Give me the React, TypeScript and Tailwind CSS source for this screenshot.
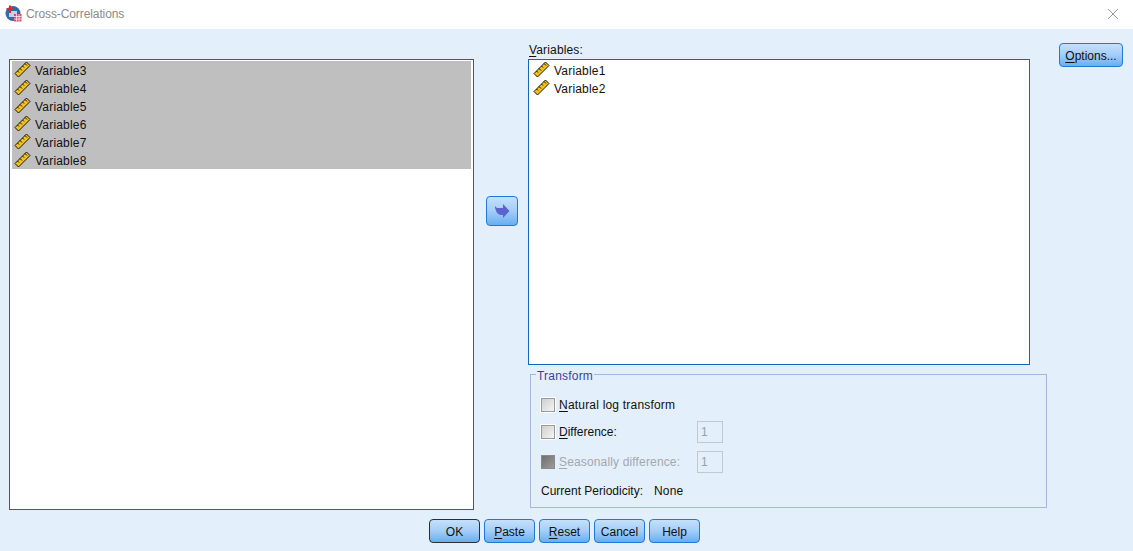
import React from "react";

const SELECTED = ["Variable3", "Variable4", "Variable5", "Variable6", "Variable7", "Variable8"];
const TARGET = ["Variable1", "Variable2"];

const btn =
  "h-[24px] rounded-[4px] border border-[#1f7ad6] bg-gradient-to-b from-[#c5e0fb] via-[#a3cdf7] to-[#68aef0] text-[12px] leading-none text-[#101010] flex items-center justify-center";

function Ruler() {
  return (
    <svg width="17" height="17" viewBox="0 0 17 17" className="shrink-0">
      <path d="M1 12.5 L12.5 1 L16 4.5 L4.5 16 Z" fill="#f2c21a" stroke="#141414" strokeWidth="1" strokeLinejoin="miter" />
      <path d="M3.5 10 L5 11.5 M6 7.5 L8 9.5 M8.5 5 L10 6.5 M11 2.5 L13 4.5" stroke="#141414" strokeWidth="1" fill="none" />
    </svg>
  );
}

function VarRow({ name, selected }: { name: string; selected?: boolean }) {
  return (
    <div className={`h-[18px] flex items-center gap-[4px] pl-[2px] ${selected ? "bg-[#bfbfbf]" : ""}`}>
      <div className="-mt-[1px] shrink-0"><Ruler /></div>
      <span className="pt-[2px] text-[12px] leading-none tracking-[0.2px] text-[#111]">{name}</span>
    </div>
  );
}

function Check({ disabled }: { disabled?: boolean }) {
  return (
    <div
      className={`w-[14px] h-[14px] border shrink-0 bg-gradient-to-br ${
        disabled
          ? "border-[#8a8a8a] from-[#6f6f6f] to-[#9c9c9c]"
          : "border-[#9a9a9a] from-[#cfcfcf] to-[#f5f5f5] shadow-[0_0_0_1px_#ffffff]"
      }`}
    />
  );
}

function U({ children }: { children: React.ReactNode }) {
  return <span className="underline underline-offset-2">{children}</span>;
}

function NumBox() {
  return <div className="w-[26px] h-[22px] border border-[#c4c8cc] text-[12px] text-[#9aa0a6] flex items-center pl-[3px]">1</div>;
}

export default function App() {
  return (
    <div className="w-[1133px] h-[551px] overflow-hidden bg-[#e3effb] flex flex-col font-['Liberation_Sans',Arial,sans-serif]">
      <div className="h-[29px] bg-white flex items-center pb-[2px] pl-[5px] pr-[14px] shrink-0">
        <svg width="17" height="17" viewBox="0 0 17 17" className="shrink-0">
          <circle cx="8" cy="8.5" r="7.5" fill="#2f6ea5" />
          <rect x="4" y="6" width="8" height="6" fill="#bcd6ee" />
          <path d="M5 0.5 V8 M1.5 4 H9" stroke="#d8263c" strokeWidth="2" />
          <rect x="9" y="9" width="7.5" height="7.5" fill="#d84a6a" />
          <path d="M11.5 9 V16.5 M14 9 V16.5 M9 11.5 H16.5 M9 14 H16.5" stroke="#fff" strokeWidth="0.7" />
        </svg>
        <span className="ml-[4px] text-[12px] tracking-[-0.1px] text-[#8b8b8b]">Cross-Correlations</span>
        <svg width="12" height="12" viewBox="0 0 12 12" className="ml-auto">
          <path d="M1 1 L11 11 M11 1 L1 11" stroke="#9a9a9a" strokeWidth="1" />
        </svg>
      </div>

      <div className="flex pl-[9px]">
        <div className="w-[465px] h-[451px] mt-[30px] border border-[#1565b8] bg-white pt-[1px] px-[2px] shrink-0">
          {SELECTED.map((v) => (
            <VarRow key={v} name={v} selected />
          ))}
        </div>

        <button className={`${btn} w-[32px] !h-[30px] mt-[167px] ml-[12px] shrink-0`}>
          <svg width="16" height="16" viewBox="0 0 16 16">
            <path d="M1 3 L3 5 H9 V1 L15.5 8 L9 15 V12 H7 C4 12 1 8 1 3 Z" fill="#5b63d0" />
          </svg>
        </button>

        <div className="w-[519px] ml-[10px] shrink-0">
          <div className="h-[30px] flex items-end pb-[3px] text-[12px] leading-none tracking-[0.15px] text-[#111] pl-[1px]">
            <span><U>V</U>ariables:</span>
          </div>
          <div className="w-[502px] h-[306px] border border-[#1565b8] bg-white pt-[1px] pl-[2px]">
            {TARGET.map((v) => (
              <VarRow key={v} name={v} />
            ))}
          </div>

          <div className="relative ml-[2px] mt-[9px] w-[517px] h-[134px] border border-[#9dbbdc] pt-[21px] pl-[10px] text-[12px] text-[#111]">
            <span className="absolute left-[5px] top-[-5px] bg-[#e3effb] px-[1px] text-[12px] leading-none tracking-[0.2px] text-[#3c3f9e]">Transform</span>
            <div className="h-[18px] flex items-center gap-[4px]">
              <Check />
              <span className="tracking-[0.2px]"><U>N</U>atural log transform</span>
            </div>
            <div className="h-[22px] mt-[7px] flex items-center">
              <Check />
              <span className="ml-[4px] w-[138px]"><U>D</U>ifference:</span>
              <NumBox />
            </div>
            <div className="h-[22px] mt-[8px] flex items-center">
              <Check disabled />
              <span className="ml-[4px] w-[138px] tracking-[0.15px] text-[#a3a8ad]"><U>S</U>easonally difference:</span>
              <NumBox />
            </div>
            <div className="mt-[12px] flex leading-none">
              <span className="w-[113px]">Current Periodicity:</span>
              <span className="tracking-[0.2px]">None</span>
            </div>
          </div>
        </div>

        <button className={`${btn} w-[64px] mt-[14px] ml-[12px] pt-[2px] self-start shrink-0`}>
          <span><U>O</U>ptions...</span>
        </button>
      </div>

      <div className="flex justify-center gap-[4px] mt-[9px] pr-[4px]">
        <button className={`${btn} w-[51px] pt-[2px] !border-[#27303a] border-[1.5px]`}>OK</button>
        <button className={`${btn} w-[51px] pt-[2px]`}><span><U>P</U>aste</span></button>
        <button className={`${btn} w-[51px] pt-[2px]`}><span><U>R</U>eset</span></button>
        <button className={`${btn} w-[51px] pt-[2px]`}>Cancel</button>
        <button className={`${btn} w-[51px] pt-[2px]`}>Help</button>
      </div>
    </div>
  );
}
